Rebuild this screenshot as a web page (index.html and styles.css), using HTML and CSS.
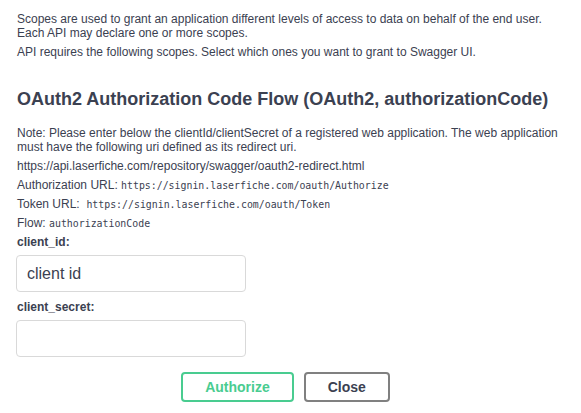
FILE: index.html
```html
<!DOCTYPE html>
<html>
<head>
<meta charset="utf-8">
<link rel="stylesheet" href="styles.css">
</head>
<body>
<div class="auth">
  <div class="scopes-info">
    <p>Scopes are used to grant an application different levels of access to data on behalf of the end user. Each API may declare one or more scopes.</p>
    <p>API requires the following scopes. Select which ones you want to grant to Swagger UI.</p>
  </div>
  <h4 class="title">OAuth2 Authorization Code Flow (OAuth2, authorizationCode)</h4>
  <p>Note: Please enter below the clientId/clientSecret of a registered web application. The web application must have the following uri defined as its redirect uri.</p>
  <p>https://api.laserfiche.com/repository/swagger/oauth2-redirect.html</p>
  <p>Authorization URL: <code>https://signin.laserfiche.com/oauth/Authorize</code></p>
  <p>Token URL: &nbsp;<code>https://signin.laserfiche.com/oauth/Token</code></p>
  <p>Flow: <code>authorizationCode</code></p>
  <div class="field field-first">
    <label class="label">client_id:</label>
    <input class="input" type="text" value="client id">
  </div>
  <div class="field field-second">
    <label class="label">client_secret:</label>
    <input class="input" type="password" value="">
  </div>
  <div class="btn-wrapper">
    <button class="btn btn-auth">Authorize</button>
    <button class="btn btn-close">Close</button>
  </div>
</div>
</body>
</html>
```
FILE: styles.css
```css
html, body {
  margin: 0;
  padding: 0;
  background: #ffffff;
}
body {
  font-family: "Liberation Sans", Arial, sans-serif;
  color: #3b4151;
}
.auth {
  padding: 12px 17px 0 17px;
}
p {
  margin: 0 0 5px 0;
  font-size: 12px;
  line-height: normal;
}
.title {
  font-size: 18px;
  font-weight: 700;
  margin: 29px 0 16px 0;
  line-height: 22px;
}
code {
  font-family: "DejaVu Sans Mono", monospace;
  font-size: 9.9px;
  line-height: 1;
}
.field {
  display: flex;
  flex-direction: column;
}
.field-first {
  margin-top: 5px;
}
.field-second {
  margin-top: 8px;
}
.label {
  font-size: 12px;
  font-weight: 700;
  line-height: 14px;
  margin-bottom: 6px;
}
.input {
  box-sizing: border-box;
  width: 230px;
  height: 37px;
  border: 1px solid #d9d9d9;
  border-radius: 4px;
  padding: 8px 10px;
  font-family: "Liberation Sans", Arial, sans-serif;
  font-size: 16px;
  color: #3b4151;
  margin-left: -1px;
}
.btn-wrapper {
  display: flex;
  justify-content: center;
  padding-top: 15px;
}
.btn {
  font-family: "Liberation Sans", Arial, sans-serif;
  font-size: 14px;
  font-weight: 700;
  padding: 5px 22px;
  border-radius: 4px;
  background: transparent;
  margin-right: 10px;
  line-height: 16px;
}
.btn-auth {
  border: 2px solid #49cc90;
  color: #49cc90;
}
.btn-close {
  border: 2px solid #808080;
  color: #3b4151;
}
```
